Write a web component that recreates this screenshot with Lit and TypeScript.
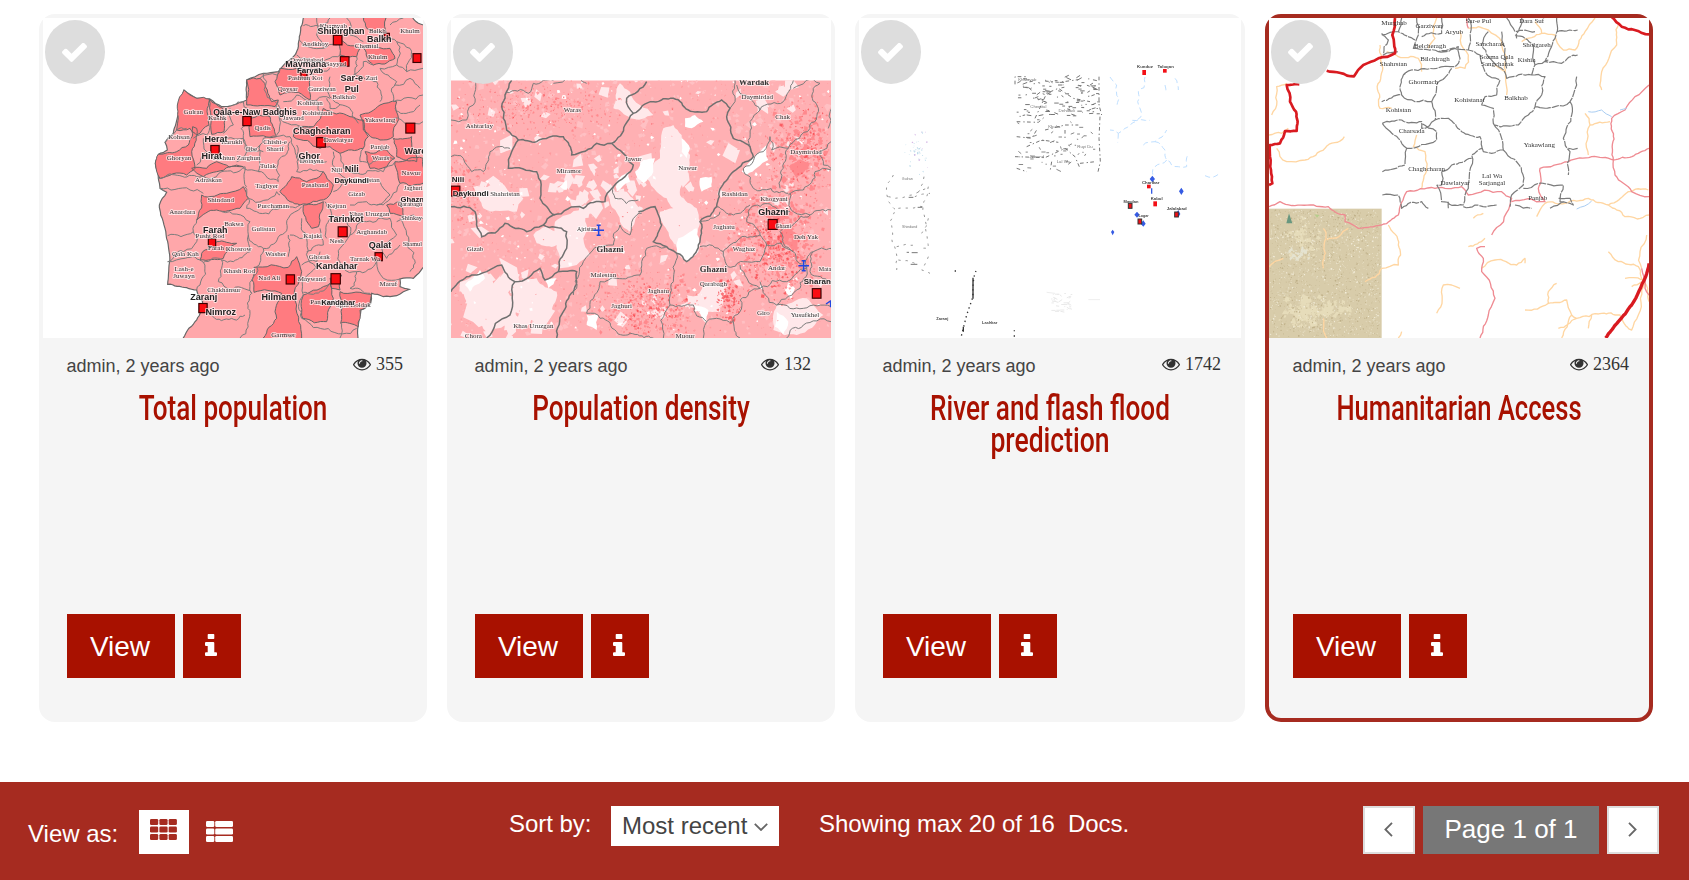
import { LitElement, html, svg, css } from "lit";
import { customElement, property, state } from "lit/decorators.js";

type Label = [number, number, string, number?];

/* ---------- map geometry helpers ---------- */

const random = (seed: number) => () => {
  seed = (Math.imul(seed, 1664525) + 1013904223) >>> 0;
  return seed / 4294967296;
};

const hash = (s: string) => {
  let h = 7;
  for (const c of s) h = (Math.imul(h, 31) + c.charCodeAt(0)) >>> 0;
  return h;
};

/** Turns a coarse "x,y x,y" list into a jagged boundary. */
const rough = (source: string, amp = 0.16, close = false): string => {
  const r = random(hash(source));
  const pts = source.trim().split(/\s+/).map((p) => p.split(",").map(Number));
  if (close) pts.push(pts[0]);
  const out: number[][] = [pts[0]];
  const split = (a: number[], b: number[]) => {
    const dx = b[0] - a[0];
    const dy = b[1] - a[1];
    if (Math.hypot(dx, dy) < 14) {
      out.push(b);
      return;
    }
    const k = (r() - 0.5) * 2 * amp;
    const m = [(a[0] + b[0]) / 2 - dy * k, (a[1] + b[1]) / 2 + dx * k];
    split(a, m);
    split(m, b);
  };
  for (let i = 1; i < pts.length; i++) split(pts[i - 1], pts[i]);
  return "M" + out.map((p) => `${p[0].toFixed(1)} ${p[1].toFixed(1)}`).join("L") + (close ? "Z" : "");
};

const lines = (list: string, amp?: number) =>
  list.split("|").map((l) => rough(l, amp)).join("");
const areas = (list: string, amp?: number) =>
  list.split("|").map((l) => rough(l, amp, true)).join("");

/** Small irregular patches inside a box, denser towards its centre. */
const scatter = (
  seed: number, count: number, cx: number, cy: number, rx: number, ry: number,
  min: number, max: number, flat = false,
): string => {
  const r = random(seed);
  let d = "";
  for (let i = 0; i < count; i++) {
    const u = flat ? r() * 2 - 1 : r() + r() - 1;
    const v = flat ? r() * 2 - 1 : r() + r() - 1;
    const x = cx + u * rx;
    const y = cy + v * ry;
    const s = min + r() * r() * (max - min);
    const a = r() * 6.28;
    const p = [0, 1.6, 3.1, 4.7].map((t) => {
      const q = s * (0.35 + r() * 0.75);
      return `${(x + Math.cos(a + t) * q).toFixed(1)} ${(y + Math.sin(a + t) * q).toFixed(1)}`;
    });
    d += "M" + p.join("L") + "Z";
  }
  return d;
};

/** Short broken horizontal and slanted strokes. */
const dashes = (seed: number, count: number, x: number, y: number, w: number, h: number) => {
  const r = random(seed);
  let d = "";
  for (let i = 0; i < count; i++) {
    const slope = r() < 0.5 ? 0 : (r() - 0.5) * 16;
    d += `M${(x + r() * w).toFixed(1)} ${(y + r() * h).toFixed(1)}l${(2 + r() * 12).toFixed(1)} ${slope.toFixed(1)}`;
  }
  return d;
};

const labels = (list: Label[], cls: string) =>
  list.map(([x, y, t, s]) => svg`<text class=${cls} x=${x} y=${y} style=${s ? `font-size:${s}px` : ""}>${t}</text>`);

const squares = (list: number[][], size: number) =>
  list.map(([x, y, s = size]) => svg`<rect class="town" x=${x - s / 2} y=${y - s / 2} width=${s} height=${s * 1.1}></rect>`);

/* ---------- the four thumbnails ---------- */

const populationMap = () => svg`
  <path fill="#ffa7aa" stroke="#666" stroke-width="3.5" d=${rough(
    "820,39 808,95 795,150 770,170 745,200 700,205 650,225 650,285 610,300 575,305 540,282 500,280 462,255 445,300 438,355 430,385 405,412 412,435 385,448 376,475 385,520 390,550 410,562 388,600 392,630 405,670 413,710 413,838 470,848 500,855 518,890 500,945 460,999 460,1010 985,1010 985,960 993,915 1022,895 1025,865 1060,875 1100,872 1120,860 1138,853 1110,845 1110,822 1150,820 1190,775 1190,60 1165,55 1140,30 820,30", 0.07, true)}></path>
  <path class="deep" d=${areas(
    "462,255 500,280 540,282 537,360 500,390 480,370 440,375 442,300|537,282 578,310 582,380 545,388|650,225 690,220 712,255 725,290 745,285 735,305 650,300|385,448 440,440 475,420 488,365 500,370 485,440 495,490 470,510 390,520 376,475|485,490 530,490 560,470 640,485 560,500 520,515|515,570 590,565 640,545 655,580 630,610 560,615 500,645|750,190 800,190 840,225 840,285 805,262 750,270 735,230|1000,39 1068,39 1070,88 1010,70|920,100 990,130 980,155 930,150|850,365 880,310 960,335 1000,345 1015,395 1000,430 930,445 900,425 870,430 790,395 795,370|990,330 1050,300 1100,290 1090,395 1050,405 1000,375|1090,400 1145,395 1160,470 1100,455|1095,470 1179,460 1179,535 1110,535|750,560 785,515 830,530 880,500 910,540 890,580 810,600 780,590|820,600 880,590 865,665 845,670|672,787 775,787 800,755 815,800 815,999 700,999 740,940 755,865 672,862|660,340 720,335 740,395 660,395|1005,440 1070,435 1095,460 1070,485 1020,490|820,870 900,835 910,880 890,950 818,940|930,860 1025,868 1020,895 990,915 985,965 932,955|515,745 560,710 620,715 580,760 510,765|1000,130 1080,130 1095,160 1030,180|1070,600 1110,590 1120,635 1080,625|900,820 935,810 930,855 905,850", 0.12)}></path>
  <path class="edge" d=${lines(
    "405,412 440,375 470,370|490,400 530,390 540,360|500,480 530,440 520,400|385,520 500,515 645,485 650,545|390,550 480,555 520,565|580,385 610,360 600,310|610,300 640,290 640,400 590,400|640,400 650,440 620,470|690,220 740,210 750,190|700,205 735,290 740,390|650,440 690,420 700,400 780,395|690,420 685,500 745,530 750,460 780,410|640,490 690,500|645,545 655,580 740,560 750,570|655,580 650,610 680,620 750,610 810,600|660,650 655,690 700,730 750,690 775,640 815,605|500,645 490,680 413,692|575,620 660,650|490,680 500,710 460,740 413,770|413,770 520,772 510,840 500,855|520,772 575,765 565,830 600,855 665,865|655,690 660,740 610,770 575,765|700,730 680,785|680,785 665,865 660,925 630,999|535,925 645,930|775,690 775,755|815,640 830,700 820,870|820,700 780,690|870,670 880,720 830,740|815,780 860,770 870,740|820,870 815,940 980,970|935,955 930,999|820,862 850,868 900,835|910,440 920,500 950,530 910,560|885,590 905,640 890,700|900,640 950,650 960,690 930,730|960,690 1010,650 1080,640 1100,690|960,600 1010,590 1040,600 1100,560 1110,535|1100,690 1060,720 1070,760 1110,720|1110,640 1130,690 1140,800|1100,650 1150,630 1179,640|930,730 940,790 980,800 1040,770|980,800 960,850 1020,865|1040,770 1060,820 1110,822|760,290 800,270 860,285 900,280|860,285 870,320|890,280 900,310 960,310 985,355|745,290 750,340 850,365|640,400 660,440 700,440|800,420 800,500 880,500|780,395 800,460 890,470|1000,430 990,470 1095,460|930,445 940,490 1060,500 1095,470|1050,530 1080,570 1040,600|900,215 890,255 930,300|980,155 975,210 1040,230 1050,290|1050,190 1100,230 1090,290 1179,270|1095,240 1140,220 1170,250|1095,310 1150,320 1170,300|1090,340 1130,360 1179,350|808,105 880,130 920,120|820,62 880,60 900,39|950,39 960,90 1000,110|860,39 860,90 880,130|1070,88 1100,110 1100,180 1050,190|1100,110 1140,130 1130,200 1179,190|1080,60 1120,39|1100,180 1130,200|800,150 850,170 900,160 930,150|850,170 850,210|970,210 1000,170 1030,180|815,190 900,190", 0.2)}></path>
  ${squares([[923, 104, 26], [944, 168, 26], [822, 208, 18], [651, 347, 25], [555, 434, 25], [873, 411, 26], [1141, 368, 27], [546, 712, 22], [938, 679, 27], [781, 822, 25], [917, 820, 28], [519, 908, 25], [1046, 754, 22], [1161, 158, 24], [1070, 93, 16]], 24)}
  ${labels([[490, 327, "Gulran"], [562, 345, "Kushk"], [447, 403, "Kohsan"], [447, 466, "Ghoryan"], [535, 531, "Adraskan"], [605, 416, "Karukh"], [664, 438, "Obe"], [620, 464, "Pashtun Zarghun"], [735, 416, "Chisht-e"], [735, 438, "Sharif"], [714, 488, "Tulak"], [710, 549, "Taghyer"], [572, 592, "Shindand"], [457, 628, "Anardara"], [855, 545, "Pasaband"], [730, 609, "Purchaman"], [612, 662, "Bakwa"], [700, 678, "Gulistan"], [558, 735, "Farah"], [540, 700, "Pusht Rod"], [466, 753, "Qala Kah"], [626, 738, "Khosrow"], [737, 753, "Washer"], [462, 797, "Lash-e"], [462, 819, "Juwayn"], [628, 804, "Khash Rod"], [582, 861, "Chakhansur"], [718, 826, "Nad Ali"], [845, 828, "Maywand"], [868, 762, "Ghorak"], [848, 698, "Kajaki"], [920, 714, "Nesh"], [1025, 687, "Arghandab"], [1005, 768, "Tarnak Wa"], [1075, 842, "Maruf"], [980, 572, "Gizab"], [920, 609, "Kejran"], [1018, 632, "Khas Uruzgan"], [920, 502, "Nili"], [1010, 532, "Sharistan"], [1050, 432, "Panjab"], [1052, 466, "Waras"], [1050, 351, "Yakawlang"], [845, 475, "Dolayna"], [925, 410, "Dawlatyar"], [790, 346, "Jawand"], [698, 374, "Qadis"], [862, 330, "Kohistanat"], [840, 300, "Kohistan"], [942, 281, "Balkhab"], [876, 257, "Gurziwan"], [773, 257, "Qaysar"], [826, 225, "Pashtun Kot"], [830, 170, "Dawlatabad"], [918, 184, "Sayyad"], [1043, 161, "Khulm"], [856, 124, "Andkhoy"], [1010, 128, "Chemtal"], [1042, 83, "Balkh"], [910, 68, "Khamyab"], [1140, 83, "Khulm"], [1025, 225, "Zari"], [1143, 510, "Nawur"], [1150, 555, "Jaghuri", 19], [1140, 602, "Qarabagh", 19], [1145, 646, "Shinkay", 19], [1147, 722, "Shamul", 19], [760, 997, "Garmser"], [880, 896, "Panjwayi"], [970, 906, "Spin Boldak"]], "place halo")}
  ${labels([[675, 330, "Qala-e-Naw Badghis", 26], [558, 412, "Herat"], [545, 463, "Hirat"], [875, 388, "Chaghcharan"], [838, 463, "Ghor"], [827, 186, "Maymana"], [840, 203, "Faryab", 24], [933, 88, "Shibirghan"], [1048, 112, "Balkh"], [965, 228, "Sar-e"], [965, 260, "Pul"], [965, 500, "Nili"], [965, 533, "Daykundi", 23], [948, 652, "Tarinkot"], [1050, 730, "Qalat"], [920, 793, "Kandahar"], [748, 884, "Hilmand"], [556, 684, "Farah"], [521, 886, "Zaranj"], [572, 931, "Nimroz"], [1172, 448, "Wardak"], [1150, 590, "Ghazni", 23], [925, 899, "Kandahar", 22]], "city halo")}
`;

const densityMap = () => svg`
  <svg x="33" y="226" width="1140" height="773" viewBox="33 226 1140 773">
    <rect x="33" y="226" width="1140" height="773" fill="#ffb0b3"></rect>
    <path fill="#ffc0c3" d=${scatter(3, 900, 600, 600, 570, 390, 4, 17, true)}></path>
    <path fill="#ff9b9e" d=${scatter(4, 800, 600, 600, 570, 390, 2, 7, true)}></path>
    <path fill="#ffe8ea" d=${scatter(5, 75, 600, 580, 570, 380, 12, 42, true) + scatter(6, 50, 200, 900, 180, 120, 18, 65) + scatter(17, 40, 440, 560, 200, 90, 14, 50)}></path>
    <path fill="#ffe8ea" d=${areas("670,370 700,360 725,390 750,450 745,510 720,570 770,610 780,650 770,730 740,750 710,720 670,660 660,620 700,610 650,560 620,520 660,460|345,650 380,630 425,615 440,660 430,700 450,750 410,780 360,790 350,720|280,690 320,665 370,690 350,720 290,715|60,830 140,800 170,850 180,940 210,960 140,985 100,930|230,830 290,820 350,860 330,940 290,960 230,900|100,545 180,530 250,580 230,620 130,610|540,235 570,260 600,300 640,330 570,340 520,310|500,560 560,560 600,620 570,680 540,650|720,900 800,830 860,850 840,920|1010,900 1100,880 1150,930 1070,990 1000,975", 0.12)}></path>
    <path fill="#fff" d=${areas("725,400 750,430 740,460 725,440|735,340 765,330 790,350 755,370 735,365|610,465 645,460 640,500 610,535 585,500|780,520 815,515 815,545 785,560|715,700 770,670 775,740 740,772 710,745|75,840 120,795 135,820 90,860|905,500 980,420 985,465 920,510|530,530 565,500 570,530 530,560|360,545 380,525 380,555|315,825 350,820 325,850|440,930 475,930 470,975 440,960|760,900 805,915 800,955|1045,825 1065,850 1055,885 1035,855|1010,920 1045,950 1030,990 1005,965", 0.12) + scatter(8, 180, 600, 600, 570, 380, 3, 11, true)}></path>
    <path fill="#ff7479" opacity=".65" d=${scatter(11, 520, 1010, 690, 150, 190, 3, 14) + scatter(12, 300, 1080, 420, 110, 160, 3, 14) + scatter(13, 360, 620, 900, 190, 120, 2, 11) + scatter(14, 230, 310, 310, 260, 90, 2, 8) + scatter(15, 130, 70, 560, 70, 120, 2, 10) + areas("960,620 1010,600 1050,640 1000,665|1040,660 1080,690 1070,740 1020,710|1050,480 1080,465 1110,475 1070,520", 0.1)}></path>
    <path fill="#f6353c" opacity=".65" d=${scatter(21, 190, 1000, 750, 100, 160, 2, 8) + scatter(22, 110, 870, 890, 45, 80, 2, 11) + scatter(23, 120, 640, 910, 120, 90, 2, 8) + scatter(24, 90, 1080, 430, 100, 160, 2, 7) + scatter(25, 70, 250, 310, 280, 70, 2, 5) + scatter(26, 70, 600, 600, 570, 380, 2, 4, true)}></path>
    <path fill="none" stroke="#707070" stroke-width="4.5" d=${lines("215,226 195,270 190,340 200,375 235,405 290,410 370,395 395,450 470,415 515,415 555,360 580,325 560,280 620,230|580,325 640,290 700,280 745,315 800,320 845,285 870,310 860,335 880,400 930,425 940,455 880,500 845,545 830,605 780,650 775,720 740,770 710,745 680,725 640,710 665,660 645,605 595,620|515,415 580,480 555,515 520,545 495,590 430,610 340,630 310,660 380,680 380,730 355,800 410,800 400,860 370,920 350,999|310,660 260,680 195,655 125,695 105,620 33,605|33,860 80,815 140,800 185,780 225,830 300,790 315,825 355,800|225,830 210,930 140,999|345,630 300,580 290,500 205,490 215,440 235,405", 0.13)}></path>
    <path class="edge" d=${lines("110,226 100,300 80,345 33,345|200,262 265,265 280,235 340,226|33,455 70,460 95,500 130,500 150,440 210,430|340,235 440,235|885,226 885,290 870,310|960,315 900,265 890,240|960,315 930,350 930,425|960,315 1030,290 1060,226|1060,250 1140,235 1120,260 1135,310 1110,370 1045,430 995,435 990,395 970,440 910,490|1045,430 1030,490 1020,550|910,490 940,550 1045,565|1173,270 1165,370|1173,410 1140,440 1150,480 1173,490|1045,570 1090,555 1125,500 1173,495|1050,565 1060,620 1110,630 1173,615|830,605 880,630 930,600|780,650 840,620|780,725 850,740 860,780 960,770 980,720 960,690 900,700 850,740|960,690 920,650 930,610 1050,620|980,720 1060,740 1100,790 1040,830 960,850 900,780|1100,790 1080,850 1010,900 960,830|960,850 880,950|1100,790 1120,740 1173,730|1110,630 1020,680 1060,740|430,770 410,850|430,770 520,720 540,660 570,690 580,640 605,625|410,850 400,870|605,770 620,730 680,725|605,770 600,810 530,820 480,830 450,910 440,925|710,745 700,830 690,900 670,999|690,900 760,900 800,950 880,950 900,999|440,925 480,940 530,980 640,999|520,545 525,580 595,585|1010,900 1090,910 1173,905|1173,950 1090,960 1040,999|800,950 790,999|1120,740 1110,800 1173,830", 0.2)}></path>
    ${squares([[46, 557, 27], [998, 657, 27], [1130, 864, 26]], 26)}
    ${labels([[397, 320, "Waras"], [118, 370, "Ashtarlay"], [387, 505, "Miramor"], [580, 468, "Jawur"], [743, 495, "Nawur"], [195, 574, "Shahristan"], [440, 678, "Ajristan", 18], [105, 738, "Gizab"], [490, 815, "Malestan"], [545, 908, "Jaghuri"], [655, 865, "Jaghatu"], [820, 843, "Qarabagh"], [852, 672, "Jaghatu"], [912, 738, "Waghaz"], [1002, 587, "Khogyani"], [1098, 701, "Deh Yak"], [1010, 794, "Andar"], [884, 573, "Rashidan"], [1098, 448, "Daymirdad"], [1028, 343, "Chak"], [952, 281, "Daymirdad"], [970, 931, "Giro"], [1095, 937, "Yusufkhel"], [280, 970, "Khas Uruzgan"], [100, 998, "Chora"], [735, 999, "Muqur"], [1155, 798, "Mata", 18], [1030, 670, "Ghazni", 16]], "place halo")}
    ${labels([[942, 240, "Wardak", 26], [510, 742, "Ghazni", 26], [820, 801, "Ghazni", 26]], "province halo")}
    ${labels([[54, 531, "Nili", 24], [92, 572, "Daykundi", 24], [1000, 631, "Ghazni"], [1132, 837, "Sharan", 24]], "city halo")}
    <g class="hospital"><path d="M460 676h32M476 659v34M470 661h12M470 691h12"></path><path d="M1075 782h32M1091 765v34M1085 767h12M1085 797h12"></path><path d="M1158 897l15-10M1172 887v20"></path></g>
  </svg>
`;

const block = "M510 238V215H545M600 228L640 232 700 224M762 215V300L770 330M765 335L762 400 766 470 758 505M515 350L580 352 600 335M515 395L560 400 575 375M600 375L660 360 700 360M660 375V405M510 455L600 458 660 430 690 455 705 490M705 475L752 470M515 490L545 500M620 470L615 500M545 425L590 405 640 412M570 340L605 265 640 250 685 280 735 290";

const floodMap = () => svg`
  <rect x="42" y="39" width="1146" height="960" fill="#fff"></rect>
  <g fill="none" stroke="#777" stroke-width="3">
    <path d=${dashes(31, 118, 512, 216, 246, 120)}></path>
    <path stroke="#888" d=${dashes(32, 50, 515, 340, 235, 155)}></path>
    <path stroke-dasharray="11 9 4 7" d=${block}></path>
    <path stroke="#999" stroke-dasharray="7 15" d=${lines("145,510 125,540 130,590 155,615 135,650 140,700 155,750 155,795|237,515 225,555 210,575 255,565|250,545 250,730 225,730|160,610 235,605|250,640 230,685|160,765 220,780|155,725 210,720|130,575 200,570 245,550|250,755 230,795 255,805", 0.1)}></path>
    <path stroke="#777" d="M185 742h7m8 1h18M205 577h-14M218 607h14M197 778h20"></path>
    <path stroke="#333" stroke-width="4" stroke-dasharray="4 10" d="M393 798Q382 820 384 875L365 930 348 997M331 796v7M508 976v3m0 12v8"></path>
    <path stroke="#333" stroke-width="4" d="M384 818v63M355 965v15"></path>
    <path stroke="#c0e0ff" stroke-width="3" stroke-dasharray="16 10" d=${lines("795,216 815,240 822,280 815,305|900,216 897,248 880,260 878,290 888,335 840,370 820,385 795,375|820,385 818,412|862,346 915,346|895,420 930,410 965,375|930,410 960,435 965,465 1000,485 1025,485 1028,450|965,465 930,485 925,520|1080,512 1105,516 1120,508|990,220 1000,255|960,240 962,265", 0.15)}></path>
    <path stroke="#e9e9e9" d=${dashes(43, 35, 615, 865, 65, 55)}></path>
    <path stroke="#eee" d="M605 862l25 3M730 884h35"></path>
  </g>
  <path fill="#88bfd9" opacity=".65" d=${scatter(51, 40, 215, 440, 40, 75, 2, 4)}></path>
  <path fill="#bd8bd5" opacity=".6" d=${scatter(52, 9, 220, 430, 45, 75, 2, 5)}></path>
  <path fill="#355be3" d="M922 512l8 10-8 10-8-10zM1009 548l7 11-7 11-7-11zM876 620l8 9-8 9-8-9zM895 646l7 10-7 9-8-9zM803 674l5 7-5 10-5-10zM918 550h4v16h-4zM1000 615l6 12-6 10-8-10z"></path>
  ${[[897, 202], [959, 199], [911, 546], [930, 596], [855, 602], [884, 649], [994, 628]].map(([x, y], i) => svg`<rect x=${x - 5} y=${y - 7} width="11" height=${i === 1 || i === 2 ? 11 : 15} fill="#f30f16" stroke=${i > 3 ? "#333" : "none"} stroke-width="3"></rect>`)}
  ${labels([[900, 190, "Kunduz"], [962, 189, "Taloqan"], [917, 536, "Charikar"], [935, 584, "Kabul"], [858, 594, "Maydan", 12], [896, 637, "Logar", 11], [995, 616, "Jalalabad"], [292, 945, "Zaranj", 12], [434, 958, "Lashkar", 12]], "mini")}
  ${labels([[547, 227, "Khamyab"], [580, 310, "Chemtal"], [665, 322, "Dehdadi"], [628, 368, "Khulm"], [720, 428, "Ruyi Du"], [575, 459, "Jawand"], [655, 475, "Lal Wa"], [187, 525, "Gulran", 11], [194, 669, "Shindand", 11]], "mini faint")}
`;

const accessMap = () => svg`
  <rect x="42" y="39" width="1140" height="960" fill="#fff"></rect>
  <rect x="42" y="611" width="338" height="388" fill="#d8ccaa"></rect>
  <path fill="#ece3c0" opacity=".7" d=${scatter(61, 110, 170, 920, 125, 50, 5, 22) + scatter(62, 60, 150, 690, 70, 75, 4, 16)}></path>
  <path fill="#bfb089" d=${scatter(63, 950, 211, 805, 166, 190, 1.5, 4.5, true)}></path>
  <path fill="#f2edda" d=${scatter(64, 800, 211, 805, 166, 190, 1.5, 4.5, true)}></path>
  <path fill="#e5e3d0" d=${scatter(65, 35, 130, 745, 35, 25, 4, 12)}></path>
  <path fill="#68977f" d="M102 625l10 30H94z"></path><path fill="#b7cd8d" d="M178 628l16 3-8 7z"></path>
  <g fill="none" stroke-linejoin="round">
    <path stroke="#ffd6a2" stroke-width="4" d=${lines("42,390 80,385 100,370|65,430 95,470 150,465 210,430 268,395|95,235 65,245 50,330|375,120 380,180 375,310 410,310|395,140 430,155 490,160 500,200|545,39 540,100 520,130|615,80 625,130 640,150 630,190 600,190|640,70 700,75 740,110 755,160 755,270|720,180 750,200|840,50 860,85 900,90 925,135 960,135 990,80 1020,39|860,85 800,110|1090,60 1085,120 1040,200 1040,255|990,325 1005,360 1065,350|1005,360 1000,450|485,390 475,425 510,440 515,490 500,550|845,635 870,595 930,595 1000,580 1060,600 1120,560 1180,555|1060,600 1110,635 1182,630|400,660 430,720 430,780 380,790 330,830|205,670 205,790|280,670 215,705|42,785 85,760|215,999 205,940|655,640 685,625|640,725 690,700|680,790 720,765 785,780 810,760 810,775|545,925 565,840 590,840 615,850|810,915 880,895 935,885 950,930 920,999|880,895 880,860 905,835|950,930 965,940 1040,925 1095,930 1130,975 1150,930 1165,830|965,940 910,970|1000,970 1010,930|1060,740 1090,770 1150,785 1170,840|1175,690 1155,740 1160,790|1110,820 1160,825|1130,845 1160,830|1165,830 1182,890|440,980 430,999", 0.14)}></path>
    <path stroke="#ef8b92" stroke-width="4" d=${lines("42,605 75,590 220,605 270,630 270,650 310,670 380,660 430,630 455,560 540,550 620,545 640,570 740,560 770,580 765,600 710,690|690,725 665,730 685,760 680,800 720,880 700,930 675,999|770,590 870,590 850,550 855,490 940,470 1010,455 1075,465 1182,430|1182,240 1140,275 1110,315 1070,340 1075,465 1080,510 1130,560 1182,575|635,39 640,70|1160,790 1170,850 1182,870", 0.1)}></path>
    <path stroke="#a9cdf2" stroke-width="3" d=${lines("1000,320 1040,315 1070,335|965,612 1010,588|1095,315 1115,310", 0.08)}></path>
    <path stroke="#7c7c7c" stroke-width="3.6" stroke-dasharray="48 3 22 3" d=${lines("380,85 400,105 385,150 430,140|485,39 490,90 475,130 550,140 610,125 615,160 600,185 545,190 470,195 445,210 440,270 380,290|440,270 480,290 530,290 545,240 590,190|530,290 540,345 580,340 620,380 675,395 685,440 710,445 745,435 740,400 715,355 715,310 680,300 690,275 725,270 735,225 690,200 675,150 640,135 550,140|640,39 640,135|700,80 680,120 700,155 740,190 755,220 830,210 840,180 835,120 780,90|740,80 750,130 755,190|830,210 870,215 860,270 840,305 820,330 790,360 720,360|840,305 900,305 945,290 965,240 965,215|945,290 950,330 925,400 945,440 940,510|940,430 968,430|382,355 440,345 500,350 500,370 540,345|382,355 430,400 455,430 545,405 545,380 500,355|455,430 450,480 382,500|545,540 560,590 625,600 640,550 650,450 680,430|560,500 590,480 650,460|560,500 560,540 545,540|745,435 800,500 805,540 770,570 765,605|805,550 850,535 925,540 915,590 955,600 945,580 910,580|382,570 430,570 440,610 500,590 520,610|580,610 580,590|625,605 660,600 725,600|780,600 830,610|885,610 930,590|800,39 785,100|905,39 900,100 870,170 920,175 968,150|905,80 968,75|440,39 430,80 480,105|500,95 560,85 560,39|430,80 380,90|755,39 780,80 840,80|840,180 880,165|445,210 470,195", 0.13)}></path>
    <path stroke="#d91a20" stroke-width="8" d=${lines("420,39 412,90 420,145 370,160 325,180 297,214 215,197|133,238 95,240 105,290 123,320 125,378 90,378 75,415 45,420 45,455 52,535 42,540|1070,36 1100,65 1182,88", 0.08)}></path>
    <path stroke="#d91a20" stroke-width="10" d=${lines("1182,775 1172,815 1130,900 1090,950 1052,999", 0.05)}></path>
  </g>
  ${labels([[417, 60, "Murghab"], [522, 70, "Garziwan"], [597, 87, "Aryub"], [525, 128, "Belcheragh"], [540, 167, "Bilchiragh"], [415, 183, "Shahrstan"], [705, 124, "Sancharak"], [845, 126, "Sholgareh"], [725, 163, "Sozma Qala"], [727, 184, "Sangcharak"], [815, 171, "Kishin", 20], [505, 236, "Ghormach"], [643, 291, "Kohistanat"], [783, 286, "Balkhab"], [430, 320, "Kohistan"], [470, 383, "Charsada"], [853, 427, "Yakawlang"], [515, 498, "Chaghcharan"], [600, 539, "Dawlatyar"], [711, 518, "Lal Wa"], [711, 539, "Sarjangal"], [848, 584, "Panjab"], [830, 54, "Dara Suf"], [670, 54, "Sar-e Pul"]], "place")}
`;

interface Doc {
  title: string[];
  squeeze: number[];
  views: number;
  map: () => unknown;
  box: string;
  featured?: boolean;
}

const DOCS: Doc[] = [
  { title: ["Total population"], squeeze: [0.745], views: 355, map: populationMap, box: "39 39 1140 960" },
  { title: ["Population density"], squeeze: [0.747], views: 132, map: densityMap, box: "33 39 1140 960" },
  { title: ["River and flash flood", "prediction"], squeeze: [0.748, 0.758], views: 1742, map: floodMap, box: "42 39 1146 960" },
  { title: ["Humanitarian Access"], squeeze: [0.731], views: 2364, map: accessMap, box: "42 39 1140 960", featured: true },
];

@customElement("doc-card")
export class DocCard extends LitElement {
  @property({ attribute: false }) doc!: Doc;

  static styles = css`
    :host { display: block; font-family: "Liberation Sans", Arial, sans-serif; }
    .card {
      box-sizing: border-box; height: 708px; display: flex; flex-direction: column;
      border: 4px solid #f5f5f5; border-radius: 16px; background: #f5f5f5;
    }
    .featured { border-color: #a62b20; }
    .thumb { position: relative; height: 320px; background: #fff; flex: none; overflow: hidden; }
    .map { display: block; width: 100%; height: 320px; overflow: hidden; filter: blur(0.35px); }
    .tick {
      position: absolute; left: 2px; top: 2px; width: 60px; height: 64px;
      border-radius: 50%; background: #ddd; display: flex; align-items: center; justify-content: center;
    }
    .tick svg { width: 25px; height: 20px; fill: #fff; margin: 1px 2px 0 0; }
    .meta {
      display: flex; justify-content: space-between; padding: 18px 20px 0 23.5px;
      font-size: 18px; line-height: 20px; color: #444; white-space: nowrap;
    }
    .views {
      display: flex; gap: 5px; font-family: "Liberation Serif", "Times New Roman", serif;
      color: #333; margin-top: -2px; height: 20px;
    }
    .eye { width: 18px; height: 14px; margin-top: 3px; }
    .title {
      margin: 17px 0 0; text-align: center; color: #a81100;
      font: 500 35px/32px Roboto, sans-serif; white-space: nowrap;
    }
    .line { display: block; }
    .actions { display: flex; gap: 8px; margin-top: auto; padding: 0 0 40px 24px; }
    .btn {
      display: flex; align-items: center; justify-content: center; height: 64px;
      padding: 0; border: 0; border-radius: 0; background: #a81100; color: #fff;
      font: 28px/32px "Liberation Sans", Arial, sans-serif;
    }
    .view { width: 108px; padding: 2px 2px 0 0; }
    .info { width: 58px; }
    .info svg { width: 12px; height: 22px; fill: #fff; margin: 0 2px 2px 0; }

    .deep { fill: #ff7b80; stroke: #666; stroke-width: 3; }
    .edge { fill: none; stroke: #7c7c7c; stroke-width: 3; }
    .town { fill: #fb0c12; stroke: #3a0000; stroke-width: 3.5; }
    .hospital { stroke: #2347df; stroke-width: 4.5; fill: none; }
    text { text-anchor: middle; }
    .place { font: 21px "Liberation Serif", serif; fill: #333; }
    .province { font: bold 28px "Liberation Serif", serif; fill: #333; }
    .city { font: bold 27px "Liberation Sans", sans-serif; fill: #222; }
    .mini { font: bold 13px "Liberation Sans", sans-serif; fill: #444; }
    .faint { font-weight: 400; fill: #777; }
    .halo { paint-order: stroke; stroke: #fff; stroke-opacity: 0.62; stroke-width: 6px; stroke-linejoin: round; }
  `;

  render() {
    const d = this.doc;
    return html`
      <article class="card ${d.featured ? "featured" : ""}">
        <div class="thumb">
          <svg class="map" viewBox=${d.box} preserveAspectRatio="none">${d.map()}</svg>
          <span class="tick">
            <svg viewBox="121 373 1550 1188"><path d="M1671 566q0 40-28 68l-724 724-136 136q-28 28-68 28t-68-28l-136-136-362-362q-28-28-28-68t28-68l136-136q28-28 68-28t68 28l294 295 656-657q28-28 68-28t68 28l136 136q28 28 28 68z"></path></svg>
          </span>
        </div>
        <div class="meta">
          <span>admin, 2 years ago</span>
          <span class="views">
            <svg class="eye" viewBox="0 256 1792 1280" fill="#333"><path d="M1664 960q-152-236-381-353 61 104 61 225 0 185-131.500 316.500t-316.500 131.500-316.500-131.500-131.500-316.500q0-121 61-225-229 117-381 353 133 205 333.500 326.500t434.500 121.500 434.500-121.500 333.500-326.500zm-720-384q0-20-14-34t-34-14q-125 0-214.500 89.500t-89.500 214.500q0 20 14 34t34 14 34-14 14-34q0-86 61-147t147-61q20 0 34-14t14-34zm848 384q0 34-20 69-140 230-376.500 368.500t-499.500 138.500-499.500-139-376.500-368q-20-35-20-69t20-69q140-229 376.500-368t499.500-139 499.500 139 376.500 368q20 35 20 69z"></path></svg>
            <span>${d.views}</span>
          </span>
        </div>
        <h3 class="title">
          ${d.title.map((t, i) => html`<span class="line" style="transform:scaleX(${d.squeeze[i]})">${t}</span>`)}
        </h3>
        <div class="actions">
          <button class="btn view">View</button>
          <button class="btn info" aria-label="Info">
            <svg viewBox="0 0 12 22"><path d="M3.400 0h5.200q.7 0 .7.7v3.600q0 .7-.7.7H3.400q-.7 0-.7-.7V.7q0-.7.7-.7zM1 8h7.300q1 0 1 1v9.300h1.700q1 0 1 1V21q0 1-1 1H1q-1 0-1-1v-1.700q0-1 1-1h1.700V12H1q-1 0-1-1V9q0-1 1-1z"></path></svg>
          </button>
        </div>
      </article>
    `;
  }
}

@customElement("app-root")
export class AppRoot extends LitElement {
  @state() private docs = DOCS;

  static styles = css`
    :host {
      display: flex; flex-direction: column; height: 880px; overflow: hidden; background: #fff;
      font-family: "Liberation Sans", Arial, sans-serif;
    }
    .cards {
      display: grid; grid-template-columns: 388px 388px 390px 388px; gap: 20px;
      padding: 14px 0 0 39px;
    }
    .bar {
      margin-top: auto; height: 98px; box-sizing: border-box; background: #a62b20; color: #fff;
      display: flex; align-items: flex-start; padding: 24px 30px 0 28px;
      font-size: 24px; line-height: 28px; white-space: pre;
    }
    .modes { display: flex; padding-top: 4px; width: 481px; }
    .modes-label { padding-top: 10px; width: 111px; }
    .mode { width: 50px; height: 44px; display: flex; justify-content: center; }
    .mode svg { width: 27px; height: 21px; margin: 9px 2px 0 0; }
    .on { background: #fff; color: #a62b20; }
    .mode.list { margin-left: 17px; width: 27px; }
    .mode.list svg { margin: 11px 0 0; }
    .sort { display: flex; width: 310px; }
    .sort-label { padding-top: 4px; width: 102px; letter-spacing: -0.05px; }
    .select {
      box-sizing: border-box; width: 168px; height: 40px; background: #fff; color: #444;
      display: flex; align-items: flex-start; padding: 6px 11px; justify-content: space-between;
    }
    .select svg { width: 14px; height: 8px; margin-top: 11px; }
    .total { padding-top: 4px; letter-spacing: -0.08px; }
    .pager { display: flex; gap: 8px; margin-left: auto; }
    .step {
      box-sizing: border-box; width: 52px; height: 48px; border: 2px solid #ddd; background: #fff;
      display: flex; align-items: center; justify-content: center; padding: 0;
    }
    .step svg { width: 9px; height: 15px; margin: 0 1px 1px 0; }
    .page { width: 176px; height: 48px; line-height: 46px; font-size: 26px; background: #777; text-align: center; }
    .stroke { fill: none; stroke: #666; stroke-width: 1.8; }
  `;

  render() {
    const rows = [0, 7.5, 15];
    return html`
      <section class="cards">${this.docs.map((d) => html`<doc-card .doc=${d}></doc-card>`)}</section>
      <footer class="bar">
        <div class="modes">
          <span class="modes-label">View as:</span>
          <span class="mode on">
            <svg viewBox="0 0 27 21" fill="currentColor">
              ${rows.map((y) => [0, 9.4, 18.700].map((x) => svg`<rect x=${x} y=${y} width="8.2" height="6" rx="1.300"></rect>`))}
            </svg>
          </span>
          <span class="mode list">
            <svg viewBox="0 0 27 21" fill="currentColor">
              ${rows.map((y) => svg`<rect x="0" y=${y} width="8.300" height="6" rx="1.300"></rect><rect x="9.200" y=${y} width="17.800" height="6" rx="1.300"></rect>`)}
            </svg>
          </span>
        </div>
        <div class="sort">
          <span class="sort-label">Sort by:</span>
          <span class="select"><span>Most recent</span><svg viewBox="0 0 14 8"><path class="stroke" d="M.8.8 7 7 13.200.8"></path></svg></span>
        </div>
        <span class="total">Showing max 20 of 16  Docs.</span>
        <div class="pager">
          <button class="step" aria-label="Previous"><svg viewBox="0 0 9 15"><path class="stroke" d="M8 .8 1.400 7.500 8 14.200"></path></svg></button>
          <span class="page">Page 1 of 1</span>
          <button class="step" aria-label="Next"><svg viewBox="0 0 9 15"><path class="stroke" d="M1 .8 7.600 7.500 1 14.200"></path></svg></button>
        </div>
      </footer>
    `;
  }
}
